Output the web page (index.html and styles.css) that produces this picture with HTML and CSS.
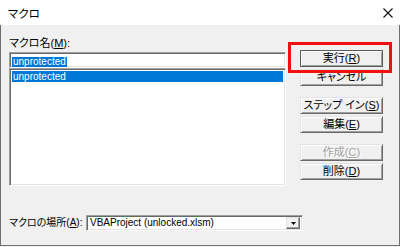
FILE: index.html
```html
<!DOCTYPE html>
<html lang="ja">
<head>
<meta charset="utf-8">
<title>マクロ</title>
<link rel="stylesheet" href="styles.css">
</head>
<body>
<div class="window">
  <div class="titlebar">
    <span class="title">マクロ</span>
    <svg class="close" width="10" height="10" viewBox="0 0 10 10"><path d="M0.5 0.5 L9.5 9.5 M9.5 0.5 L0.5 9.5" stroke="#111" stroke-width="1.1" fill="none"/></svg>
  </div>
  <div class="body">
    <div class="main">
      <div class="left">
        <div class="lbl">マクロ名(<u>M</u>):</div>
        <div class="input"><span class="sel en">unprotected</span></div>
        <div class="list"><div class="item en">unprotected</div></div>
      </div>
      <div class="buttons">
        <div class="btn default">実行(<u>R</u>)</div>
        <div class="btn">キャンセル</div>
        <div class="btn group">ステップ イン(<u>S</u>)</div>
        <div class="btn">編集(<u>E</u>)</div>
        <div class="btn group disabled">作成(<u>C</u>)</div>
        <div class="btn">削除(<u>D</u>)</div>
      </div>
    </div>
    <div class="loc">
      <div class="lbl small">マクロの場所(<u>A</u>):</div>
      <div class="combo">
        <span class="value en">VBAProject (unlocked.xlsm)</span>
        <div class="drop"><svg width="5" height="3" viewBox="0 0 5 3"><path d="M0 0 H5 L2.5 3 Z" fill="#000"/></svg></div>
      </div>
    </div>
  </div>
  <div class="highlight"></div>
</div>
</body>
</html>
```

FILE: styles.css
```css
html, body {
  margin: 0;
  padding: 0;
  background: #f0f0f0;
}
body {
  width: 400px;
  height: 247px;
  overflow: hidden;
  font-family: "Liberation Sans", "Noto Sans CJK JP", sans-serif;
  font-size: 11px;
  font-feature-settings: "palt";
  color: #000;
}
u { text-decoration: underline; text-underline-offset: 1px; }
.window {
  position: relative;
  width: 400px;
  height: 246px;
  display: flex;
  flex-direction: column;
}
.titlebar {
  height: 25px;
  flex: none;
  background: #fff;
  display: flex;
  align-items: center;
  justify-content: space-between;
  padding: 0 7px 0 8px;
  box-sizing: border-box;
}
.title {
  font-family: "Noto Sans CJK JP", sans-serif;
  font-size: 11.5px;
  line-height: 14px;
  margin-top: 1px;
}
.close { display: block; margin-top: 1px; }
.body {
  flex: 1;
  background: #f0f0f0;
  border-left: 1px solid #6e6e6e;
  border-right: 1px solid #6e6e6e;
  border-bottom: 1px solid #6e6e6e;
  padding: 11px 0 0 7px;
  display: flex;
  flex-direction: column;
}
.main {
  display: flex;
  align-items: flex-start;
}
.left {
  width: 277px;
  margin-left: 1px;
  display: flex;
  flex-direction: column;
}
.lbl {
  line-height: 14px;
  height: 14px;
  white-space: nowrap;
}
.lbl.small { font-size: 10px; }
.left .lbl { margin-bottom: 2px; }
.en { font-size: 10px; }
.input, .list, .combo {
  box-sizing: border-box;
  background: #fff;
  border: 1px solid;
  border-color: #a0a0a0 #fff #fff #a0a0a0;
  box-shadow: inset 1px 1px #696969, inset -1px -1px #e3e3e3;
}
.input {
  height: 16px;
  padding: 2px 0 0 2px;
}
.sel {
  display: inline-block;
  background: #0078d7;
  color: #fff;
  line-height: 10px;
  height: 10px;
  padding: 0 1px;
}
.list {
  height: 118px;
  padding: 2px 2px 0 2px;
}
.item {
  background: #0078d7;
  color: #fff;
  height: 11px;
  line-height: 11px;
  padding-left: 1px;
}
.buttons {
  margin-left: 14px;
  margin-top: 14px;
  display: flex;
  flex-direction: column;
  gap: 2px;
}
.btn {
  width: 83px;
  height: 17px;
  box-sizing: border-box;
  border: 1px solid;
  border-color: #e3e3e3 #696969 #696969 #e3e3e3;
  box-shadow: inset 1px 1px #fff, inset -1px -1px #a0a0a0;
  background: #f0f0f0;
  text-align: center;
  line-height: 15px;
  white-space: nowrap;
}
.btn.default {
  border-color: #5a5a5a;
  box-shadow: inset 1px 1px #fff, inset -1px -1px #a0a0a0;
}
.btn.group { margin-top: 9px; }
.btn.disabled {
  color: #a0a0a0;
  text-shadow: 1px 1px #fff;
}
.loc {
  margin-top: 29px;
  display: grid;
  grid-template-columns: 78px 217px;
  align-items: center;
}
.loc .lbl { padding-left: 1px; }
.combo {
  height: 16px;
  display: flex;
  align-items: center;
  justify-content: space-between;
  padding: 2px 2px 2px 3px;
}
.value { line-height: 12px; }
.drop {
  width: 14px;
  height: 12px;
  box-sizing: border-box;
  background: #f0f0f0;
  border: 1px solid;
  border-color: #e3e3e3 #696969 #696969 #e3e3e3;
  box-shadow: inset -1px -1px #a0a0a0;
  display: flex;
  align-items: center;
  justify-content: center;
}
.drop svg { display: block; }
.highlight {
  position: absolute;
  left: 288px;
  top: 42px;
  width: 104px;
  height: 31px;
  box-sizing: border-box;
  border: 3px solid #f01010;
}
```
